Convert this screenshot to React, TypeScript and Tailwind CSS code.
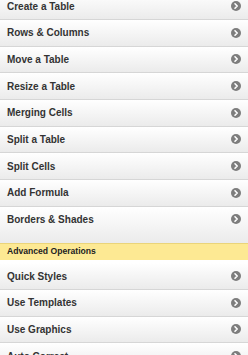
const basics = [
  'Create a Table',
  'Rows & Columns',
  'Move a Table',
  'Resize a Table',
  'Merging Cells',
  'Split a Table',
  'Split Cells',
  'Add Formula',
  'Borders & Shades',
];

const advanced = ['Quick Styles', 'Use Templates', 'Use Graphics', 'Auto Correct'];

function Chevron() {
  return (
    <svg width="10" height="10" viewBox="0 0 10 10" className="shrink-0">
      <circle cx="5" cy="5" r="5" fill="#7d7d7d" />
      <path d="M4 2.8 L6.2 5 L4 7.2" fill="none" stroke="#fff" strokeWidth="1.6" strokeLinecap="round" strokeLinejoin="round" />
    </svg>
  );
}

function Row({ label, last }: { label: string; last?: boolean }) {
  return (
    <div
      className={`flex items-start justify-between pl-[7px] pr-[7px] bg-gradient-to-b from-white to-[#ebebeb] border-b border-[#d6d6d6] ${
        last ? 'h-[36.33px] border-b-0' : 'h-[26.67px]'
      }`}
    >
      <div className="flex h-[25.67px] w-full items-center justify-between">
        <span className="text-[10px] font-bold text-[#333]">{label}</span>
        <Chevron />
      </div>
    </div>
  );
}

export default function App() {
  return (
    <div className="w-[248px] h-[355px] overflow-hidden bg-white" style={{ fontFamily: '"Liberation Sans", Arial, sans-serif' }}>
      <div className="-mt-[6.67px]">
        {basics.map((label, i) => (
          <Row key={label} label={label} last={i === basics.length - 1} />
        ))}
        <div className="h-[17px] flex items-center pl-[7px] bg-[#fde993] border-t border-[#ead47a]">
          <span className="text-[8.6px] font-bold text-[#222]">Advanced Operations</span>
        </div>
        <div className="pt-[3.33px] bg-white">
          {advanced.map((label) => (
            <Row key={label} label={label} />
          ))}
        </div>
      </div>
    </div>
  );
}
